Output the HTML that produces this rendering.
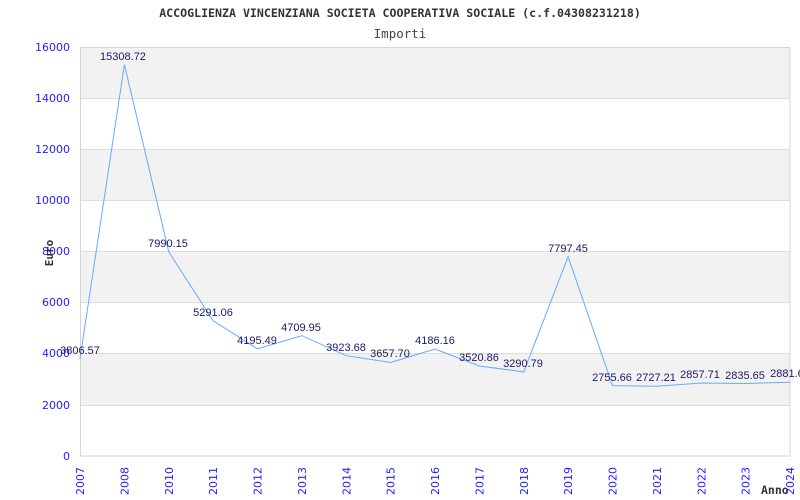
<!DOCTYPE html>
<html><head><meta charset="utf-8"><style>
html,body{margin:0;padding:0;background:#fff;width:800px;height:500px;overflow:hidden}
</style></head><body>
<svg width="800" height="500" xmlns="http://www.w3.org/2000/svg">
<rect width="800" height="500" fill="#fff"/>
<g fill="#f2f2f2">
<rect x="80" y="47" width="710" height="51"/>
<rect x="80" y="149" width="710" height="51"/>
<rect x="80" y="251" width="710" height="51"/>
<rect x="80" y="353" width="710" height="52"/>
</g>
<g stroke="#dddddd" stroke-width="1">
<line x1="80" y1="98.5" x2="790" y2="98.5"/>
<line x1="80" y1="149.5" x2="790" y2="149.5"/>
<line x1="80" y1="200.5" x2="790" y2="200.5"/>
<line x1="80" y1="251.5" x2="790" y2="251.5"/>
<line x1="80" y1="302.5" x2="790" y2="302.5"/>
<line x1="80" y1="353.5" x2="790" y2="353.5"/>
<line x1="80" y1="405.5" x2="790" y2="405.5"/>
</g>
<rect x="80.5" y="47.5" width="709.5" height="408.5" fill="none" stroke="#d4d4d4"/>
<text x="400" y="17" text-anchor="middle" font-family="DejaVu Sans Mono, monospace" font-size="11.6" font-weight="bold" fill="#333">ACCOGLIENZA VINCENZIANA SOCIETA COOPERATIVA SOCIALE (c.f.04308231218)</text>
<text x="400" y="38" text-anchor="middle" font-family="DejaVu Sans Mono, monospace" font-size="12.5" fill="#444">Importi</text>
<g font-family="DejaVu Sans, sans-serif" font-size="11" fill="#2222ff" text-anchor="end">
<text x="70" y="51">16000</text>
<text x="70" y="102">14000</text>
<text x="70" y="153">12000</text>
<text x="70" y="204">10000</text>
<text x="70" y="255">8000</text>
<text x="70" y="306">6000</text>
<text x="70" y="357">4000</text>
<text x="70" y="409">2000</text>
<text x="70" y="460">0</text>
</g>
<text transform="translate(53,253) rotate(-90)" text-anchor="middle" font-family="DejaVu Sans Mono, monospace" font-size="11" font-weight="bold" fill="#333">Euro</text>
<text x="761" y="494" font-family="DejaVu Sans Mono, monospace" font-size="11.5" font-weight="bold" fill="#333">Anno</text>
<g font-family="DejaVu Sans, sans-serif" font-size="11" fill="#2222ff" text-anchor="end">
<text transform="translate(84,467) rotate(-90)">2007</text>
<text transform="translate(128.4,467) rotate(-90)">2008</text>
<text transform="translate(172.75,467) rotate(-90)">2010</text>
<text transform="translate(217.1,467) rotate(-90)">2011</text>
<text transform="translate(261.5,467) rotate(-90)">2012</text>
<text transform="translate(305.9,467) rotate(-90)">2013</text>
<text transform="translate(350.25,467) rotate(-90)">2014</text>
<text transform="translate(394.6,467) rotate(-90)">2015</text>
<text transform="translate(439,467) rotate(-90)">2016</text>
<text transform="translate(483.4,467) rotate(-90)">2017</text>
<text transform="translate(527.75,467) rotate(-90)">2018</text>
<text transform="translate(572.1,467) rotate(-90)">2019</text>
<text transform="translate(616.5,467) rotate(-90)">2020</text>
<text transform="translate(660.9,467) rotate(-90)">2021</text>
<text transform="translate(705.25,467) rotate(-90)">2022</text>
<text transform="translate(749.6,467) rotate(-90)">2023</text>
<text transform="translate(794,467) rotate(-90)">2024</text>
</g>
<polyline fill="none" stroke="#66aaff" stroke-width="1" points="80,358.7 124.4,64.7 168.75,251.8 213.1,320.8 257.5,348.8 301.9,335.6 346.25,355.7 390.6,362.5 435,349 479.4,366 523.75,371.9 568.1,256.7 612.5,385.6 656.9,386.3 701.25,383 745.6,383.5 790,382.3"/>
<g font-family="Liberation Sans, sans-serif" font-size="11" fill="#1a1a66" text-anchor="middle">
<text x="80" y="354">3806.57</text>
<text x="123" y="60">15308.72</text>
<text x="168" y="247">7990.15</text>
<text x="213" y="316">5291.06</text>
<text x="257" y="344">4195.49</text>
<text x="301" y="331">4709.95</text>
<text x="346" y="351">3923.68</text>
<text x="390" y="357">3657.70</text>
<text x="435" y="344">4186.16</text>
<text x="479" y="361">3520.86</text>
<text x="523" y="367">3290.79</text>
<text x="568" y="252">7797.45</text>
<text x="612" y="381">2755.66</text>
<text x="656" y="381">2727.21</text>
<text x="700" y="378">2857.71</text>
<text x="745" y="379">2835.65</text>
<text x="790" y="377">2881.60</text>
</g>
</svg>
</body></html>
